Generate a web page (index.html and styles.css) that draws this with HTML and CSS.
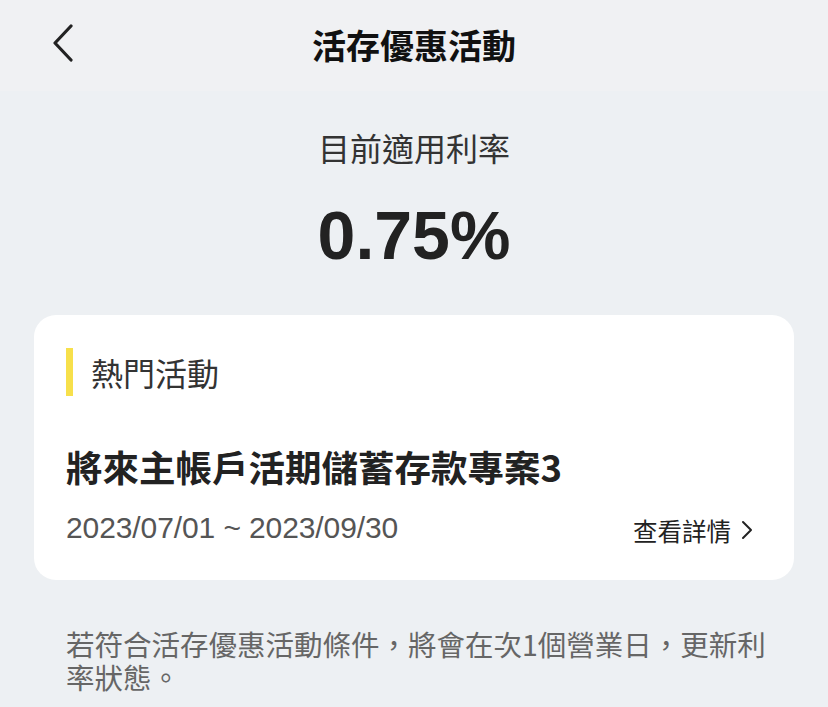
FILE: index.html
```html
<!DOCTYPE html>
<html lang="zh-Hant">
<head>
    <meta charset="UTF-8">
    <meta name="viewport" content="width=device-width, initial-scale=1.0">
    <title>活存優惠活動</title>
    <link rel="stylesheet" href="styles.css">
</head>
<body>
    <header class="nav">
        <button class="back" aria-label="返回">
            <svg width="22" height="38" viewBox="0 0 22 38">
                <path d="M19 2 L3 19 L19 36" fill="none" stroke="#222" stroke-width="3.2" stroke-linecap="round" stroke-linejoin="round"/>
            </svg>
        </button>
        <h1>活存優惠活動</h1>
    </header>

    <main class="content">
        <section class="rate">
            <div class="rate-label">目前適用利率</div>
            <div class="rate-value">0.75%</div>
        </section>

        <section class="card">
            <h2 class="card-tag">熱門活動</h2>
            <div class="promo-name">將來主帳戶活期儲蓄存款專案3</div>
            <div class="promo-row">
                <span class="promo-date">2023/07/01 ~ 2023/09/30</span>
                <a class="promo-link" href="#">查看詳情
                    <svg width="12" height="20" viewBox="0 0 12 20">
                        <path d="M2 2 L10 10 L2 18" fill="none" stroke="#222" stroke-width="2" stroke-linecap="round" stroke-linejoin="round"/>
                    </svg>
                </a>
            </div>
        </section>

        <p class="note">若符合活存優惠活動條件，將會在次1個營業日，更新利率狀態。</p>
    </main>
</body>
</html>
```

FILE: styles.css
```css
body {
    margin: 0;
    padding: 0;
    font-family: "Noto Sans CJK TC", "Noto Sans", sans-serif;
    background-color: #edf0f3;
    color: #222;
}

.nav {
    height: 91px;
    background-color: #f0f1f3;
    display: flex;
    align-items: center;
    justify-content: center;
    position: relative;
}

.back {
    position: absolute;
    left: 52px;
    top: 24px;
    padding: 0;
    border: none;
    background: none;
    cursor: pointer;
}

.back svg {
    display: block;
}

.nav h1 {
    margin: 0;
    margin-top: -3px;
    font-size: 34px;
    font-weight: 700;
    color: #111;
}

.content {
    padding: 0 34px;
}

.rate {
    text-align: center;
    padding-top: 34px;
}

.rate-label {
    font-size: 32px;
    line-height: 44px;
    color: #333;
}

.rate-value {
    margin-top: 26px;
    font-family: "Liberation Sans", Arial, sans-serif;
    font-size: 68px;
    font-weight: 700;
    line-height: 80px;
    color: #222;
}

.card {
    margin-top: 40px;
    background: #fff;
    border-radius: 22px;
    padding: 33px 32px 32px;
}

.card-tag {
    margin: 0;
    border-left: 7px solid #f7e04b;
    padding-left: 18px;
    font-size: 32px;
    font-weight: 400;
    line-height: 48px;
    color: #333;
}

.promo-name {
    margin-top: 46px;
    font-size: 36.5px;
    font-weight: 700;
    line-height: 50px;
    color: #222;
}

.promo-row {
    margin-top: 16px;
    display: flex;
    align-items: center;
    justify-content: space-between;
}

.promo-date {
    font-family: "Liberation Sans", Arial, sans-serif;
    font-size: 30px;
    line-height: 40px;
    color: #555;
    letter-spacing: -0.1px;
}

.promo-link {
    display: flex;
    align-items: center;
    gap: 10px;
    font-size: 24.5px;
    color: #222;
    text-decoration: none;
    margin-right: 9px;
    margin-top: 4px;
}

.note {
    margin: 47px 16px 0 32px;
    font-size: 28.5px;
    line-height: 33px;
    color: #666;
}
```
